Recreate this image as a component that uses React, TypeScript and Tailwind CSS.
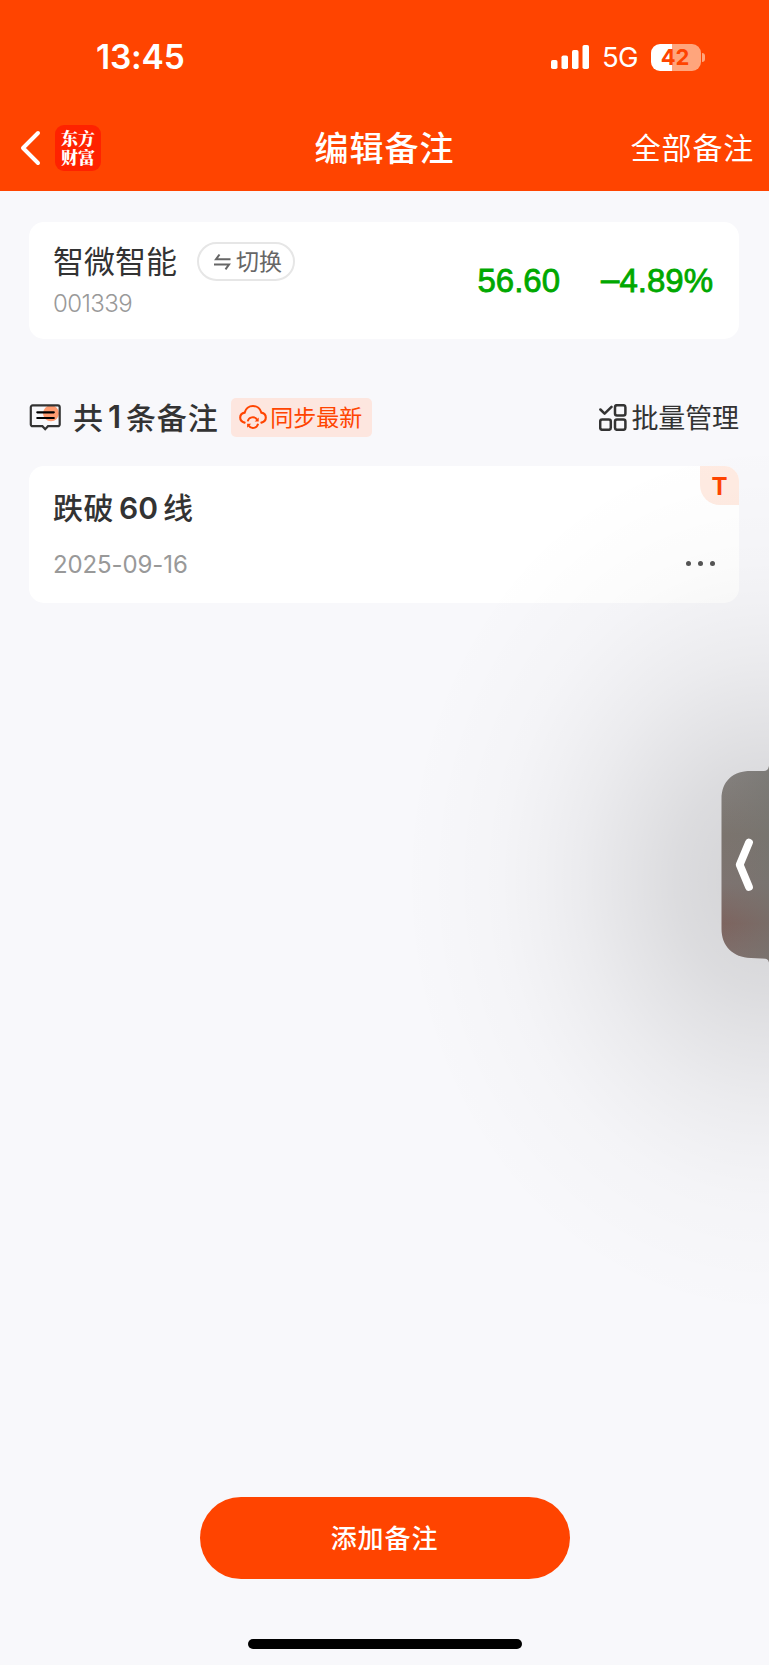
import React from "react";

const SignalBars: React.FC = () => (
  <svg width="39" height="26" viewBox="0 0 39 26" fill="#fff">
    <rect x="0" y="16" width="6.5" height="9" rx="1.8" />
    <rect x="10.5" y="11.5" width="6.5" height="13.5" rx="1.8" />
    <rect x="21" y="6" width="6.5" height="19" rx="1.8" />
    <rect x="31.5" y="1" width="6.5" height="24" rx="1.8" />
  </svg>
);

const NoteIcon: React.FC = () => (
  <svg width="34" height="33" viewBox="0 0 34 33" fill="none">
    <circle cx="22" cy="12.3" r="8" fill="#ff9b70" />
    <path
      d="M3.6 4.4h25.3a1.8 1.8 0 0 1 1.8 1.8v17.2a1.8 1.8 0 0 1-1.8 1.8h-9.9l-2.8 3-2.800-3H3.600a1.800 1.800 0 0 1-1.800-1.800V6.200a1.800 1.800 0 0 1 1.800-1.800z"
      stroke="#333"
      strokeWidth="2.2"
    />
    <path
      d="M8.3 11.3h16.5M8.3 17h16.5"
      stroke="#000"
      strokeWidth="2.2"
      strokeLinecap="round"
    />
  </svg>
);

const CloudSyncIcon: React.FC = () => (
  <svg
    width="28"
    height="27"
    viewBox="0 0 28 27"
    fill="none"
    stroke="#ff4400"
    strokeWidth="2.1"
    strokeLinecap="round"
  >
    <path d="M5.6 18.6C2.9 18 1.2 16 1.2 13.6c0-2.600 1.900-4.600 4.500-5C6.600 4.600 10 2 14 2s7.400 2.600 8.300 6.600c2.600.4 4.500 2.400 4.500 5 0 2.400-1.700 4.400-4.400 5" />
    <path
      d="M8.7 17.4a5.2 5.2 0 0 1 9.4-1.800M19.100 19.800a5.200 5.200 0 0 1-9.400 1.800"
      strokeWidth="1.9"
      strokeLinecap="butt"
    />
    <path d="M19.7 13.4v4h-4zM8.1 23.8v-4h4z" fill="#ff4400" stroke="none" />
  </svg>
);

const ManageIcon: React.FC = () => (
  <svg
    width="28"
    height="27"
    viewBox="0 0 28 27"
    fill="none"
    stroke="#333"
    strokeWidth="2.5"
  >
    <path
      d="M1.4 5.500l4.200 4.200 6.900-6.800"
      strokeLinecap="round"
      strokeLinejoin="round"
    />
    <rect x="16" y="1.2" width="10.400" height="10.300" rx="2" />
    <rect x="1.2" y="15.500" width="10.600" height="10.300" rx="2" />
    <rect x="16" y="15.500" width="10.400" height="10.300" rx="2" />
  </svg>
);

const StatusBar: React.FC = () => (
  <div className="flex h-[114px] items-center justify-between pr-[64px] pl-[96px]">
    <span className="mt-px font-['Inter'] text-[33.5px] leading-none font-semibold tracking-[-0.2px]">
      13:45
    </span>
    <div className="flex items-center">
      <SignalBars />
      <span className="mt-[2px] ml-[12px] font-['Inter'] text-[27.5px] leading-none tracking-[-0.6px]">
        5G
      </span>
      <div className="ml-[13px] flex h-[27px] w-[50px] items-center justify-center rounded-[9px] bg-linear-to-r from-white from-42% to-[#ffa57c] to-42% pr-[2px] font-['Inter'] text-[22px] font-bold text-[#ff4400]">
        42
      </div>
      <div className="ml-px h-[9px] w-[3px] rounded-r-full bg-[#ffa57c]" />
    </div>
  </div>
);

const Header: React.FC = () => (
  <header className="h-[191px] bg-[#ff4400] text-white">
    <StatusBar />
    <div className="grid h-[68px] grid-cols-3 items-center pr-[15px] pl-[20px]">
      <div className="flex items-center">
        <svg width="22" height="36" viewBox="0 0 22 36" fill="none">
          <path
            d="M18 3L3 18l15 15"
            stroke="#fff"
            strokeWidth="4"
            strokeLinecap="round"
            strokeLinejoin="round"
          />
        </svg>
        <p className="ml-[13px] h-[46px] w-[46px] rounded-[9px] bg-[#ff2200] pt-[3px] text-center font-['Noto_Serif_CJK_SC','Noto_Sans_CJK_SC',serif] text-[17px] leading-[19px] font-black">
          东方
          <br />
          财富
        </p>
      </div>
      <h1 className="-ml-[5px] pb-[4px] text-center text-[34px] font-medium tracking-[1px] whitespace-nowrap">
        编辑备注
      </h1>
      <span className="justify-self-end pb-[4px] text-[30px] tracking-[0.8px] whitespace-nowrap">
        全部备注
      </span>
    </div>
  </header>
);

const StockCard: React.FC = () => (
  <section className="mt-[31px] flex h-[117px] items-center justify-between rounded-[15px] bg-white pr-[26px] pl-[24px]">
    <div>
      <div className="flex items-center">
        <span className="-mt-[5px] text-[31px] leading-[40px] text-[#333]">
          智微智能
        </span>
        <button className="-mt-[2px] ml-[20px] flex h-[39px] w-[98px] items-center justify-center rounded-full border-2 border-[#e6e6e6] pl-[4px] text-[23px] text-[#666]">
          <svg
            width="17"
            height="18"
            viewBox="0 0 17 18"
            fill="none"
            stroke="#666"
            strokeWidth="2"
            className="mr-[5px]"
          >
            <path d="M16.500 6.300H2L5.500 1.500M0 11.500h15L11.500 16.300" />
          </svg>
          <span className="-mt-[3px]">切换</span>
        </button>
      </div>
      <p className="mt-[8px] -mb-[2px] font-['Inter'] text-[24px] leading-[30px] font-light tracking-[-0.6px] text-[#999]">
        001339
      </p>
    </div>
    <div className="flex gap-[41px] font-['Liberation_Sans'] text-[33px] text-[#00a800] [-webkit-text-stroke:0.8px_#00a800]">
      <span>56.60</span>
      <span className="flex">
        <span className="-mt-[2px]">–</span>4.89%
      </span>
    </div>
  </section>
);

const NotesToolbar: React.FC = () => (
  <div className="mt-[59px] flex h-[39px] items-center justify-between text-[#333]">
    <div className="flex items-center">
      <NoteIcon />
      <h2 className="ml-[10px] flex items-center text-[30px] font-medium tracking-[0.9px] whitespace-nowrap">
        <span className="-mt-[3px]">共</span>
        <span className="mx-[4px] font-['Inter'] text-[31px] font-semibold">
          1
        </span>
        <span className="-mt-[3px]">条备注</span>
      </h2>
      <button className="ml-[12px] flex h-[39px] w-[141px] items-center justify-center rounded-[5px] bg-[#fde6df] pr-px text-[23px] whitespace-nowrap text-[#ff4400]">
        <CloudSyncIcon />
        <span className="-mt-[2px] ml-[3px]">同步最新</span>
      </button>
    </div>
    <button className="flex items-center text-[27px] whitespace-nowrap">
      <ManageIcon />
      <span className="ml-[4px] tracking-[-0.1px]">批量管理</span>
    </button>
  </div>
);

const NoteCard: React.FC = () => (
  <article className="relative mt-[29px] h-[137px] rounded-[15px] bg-white pt-[22px] pr-[24px] pl-[24px]">
    <h3 className="flex h-[40px] items-center text-[30px] font-medium tracking-[0.5px] text-[#333]">
      <span className="-mt-[4px]">跌破</span>
      <span className="mx-[5px] font-['Inter'] font-semibold tracking-normal">
        60
      </span>
      <span className="-mt-[4px]">线</span>
    </h3>
    <div className="mt-[20px] flex h-[32px] items-center justify-between">
      <time className="mt-px font-['Inter'] text-[24px] tracking-[-0.1px] text-[#999]">
        2025-09-16
      </time>
      <div className="-mt-[2px] flex gap-[7px]">
        <i className="h-[5px] w-[5px] rounded-full bg-[#555]" />
        <i className="h-[5px] w-[5px] rounded-full bg-[#555]" />
        <i className="h-[5px] w-[5px] rounded-full bg-[#555]" />
      </div>
    </div>
    <span className="absolute top-0 right-0 flex h-[39px] w-[39px] items-center justify-center rounded-tr-[15px] rounded-bl-[20px] bg-[#ffebe2] pt-[2px] font-['Inter'] text-[24px] font-bold text-[#ff4400]">
      T
    </span>
  </article>
);

// collapsed side drawer handle and the shade it casts over the page
const SideHandle: React.FC = () => (
  <>
    <div className="pointer-events-none absolute top-[400px] right-0 h-[960px] w-[384px] bg-[radial-gradient(ellipse_370px_440px_at_100%_50%,rgba(0,0,0,0.15)_0%,rgba(0,0,0,0.135)_13%,rgba(0,0,0,0.115)_25%,rgba(0,0,0,0.088)_36%,rgba(0,0,0,0.052)_51%,rgba(0,0,0,0.03)_62%,rgba(0,0,0,0.017)_73%,rgba(0,0,0,0.007)_86%,transparent_100%)]" />
    <svg
      className="absolute top-[764px] right-0"
      width="48"
      height="202"
      viewBox="0 0 48 202"
      fill="none"
    >
      <defs>
        <linearGradient id="handle" x1="0" y1="0" x2="0" y2="1">
          <stop offset="0" stopColor="#858280" />
          <stop offset="0.35" stopColor="#7b746e" />
          <stop offset="0.6" stopColor="#7d7370" />
          <stop offset="0.8" stopColor="#7d645f" />
          <stop offset="1" stopColor="#7f716e" />
        </linearGradient>
        <linearGradient id="sheen" x1="0" y1="0" x2="1" y2="0">
          <stop offset="0" stopColor="#787470" stopOpacity="0" />
          <stop offset="1" stopColor="#747570" stopOpacity="0.5" />
        </linearGradient>
      </defs>
      <path
        d="M48 2c-.5 3.500-2 5-5 5H30C12 7 .5 17 .5 35v130c0 17 11.500 28.500 29.500 29l13 .500c3 0 4.500 1 5 4z"
        fill="url(#handle)"
      />
      <path
        d="M48 2c-.5 3.500-2 5-5 5H30C12 7 .5 17 .5 35v130c0 17 11.500 28.500 29.500 29l13 .500c3 0 4.500 1 5 4z"
        fill="url(#sheen)"
      />
      <path
        d="M28 78.500L18.700 100.800 28 123"
        stroke="#fff"
        strokeWidth="7.800"
        strokeLinecap="round"
        strokeLinejoin="round"
      />
    </svg>
  </>
);

const App: React.FC = () => {
  return (
    <div className="relative flex h-[1665px] w-[769px] flex-col overflow-hidden bg-[#f8f8fb] font-['Noto_Sans_CJK_SC',sans-serif]">
      <Header />
      <main className="flex-1 pr-[30px] pl-[29px]">
        <StockCard />
        <NotesToolbar />
        <NoteCard />
      </main>
      <footer className="flex flex-col items-center pb-[16px]">
        <button className="h-[82px] w-[370px] rounded-full bg-[#ff4400] pb-[4px] text-[26px] font-medium tracking-[0.9px] text-white">
          添加备注
        </button>
        <div className="mt-[60px] h-[10px] w-[274px] rounded-full bg-black" />
      </footer>
      <SideHandle />
    </div>
  );
};

export default App;
